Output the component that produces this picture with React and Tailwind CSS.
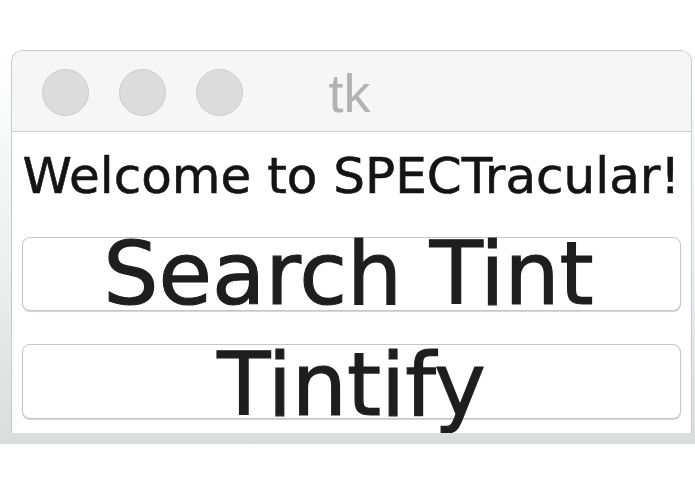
import React from "react";

// Tk window screenshot: title bar with traffic lights, label and two buttons
function TrafficLight() {
  return <span className="block w-[47px] h-[47px] rounded-full bg-[#dcdcdc] border border-[#cdcdcd]" />;
}

export default function App() {
  return (
    <div className="w-[695px] h-[494px] bg-white overflow-hidden" style={{ fontFamily: '"DejaVu Sans", "Noto Sans", sans-serif' }}>
      <div className="h-[50px]" />
      <div className="bg-gradient-to-b from-[#ffffff] via-[#eef1f1] to-[#d6dede] pl-[11px] pr-[3px] pb-[11px]">
        <div className="rounded-t-[12px] border border-b-0 border-[#c9c9c9] overflow-hidden bg-white">
          {/* Title bar */}
          <div className="h-[81px] bg-[#f6f6f6] border-b border-[#cfcfcf] grid grid-cols-[1fr_auto_1fr]">
            <div className="flex gap-[30px] pl-[30px] pt-[18px]">
              <TrafficLight />
              <TrafficLight />
              <TrafficLight />
            </div>
            <div
              className="text-[54px] leading-[60px] text-[#b3b3b3] pt-[12px] -translate-x-[2px]"
              style={{ fontFamily: '"Liberation Sans", Arial, sans-serif' }}
            >
              tk
            </div>
            <div />
          </div>

          {/* Content */}
          <div className="h-[301px] px-[10px] pt-[16px] flex flex-col">
            <p className="text-center text-[50px] leading-[56px] text-[#141414] whitespace-nowrap [-webkit-text-stroke:0.6px_#141414]">
              Welcome to SPECTracular!
            </p>
            <button className="mt-[33px] h-[74px] w-full rounded-[8px] border border-[#c6c6c6] bg-white shadow-[0_1px_1px_rgba(0,0,0,0.18)] text-[87px] leading-[72px] text-[#1e1e1e] whitespace-nowrap overflow-visible [-webkit-text-stroke:1.2px_#1e1e1e]">
              <span className="inline-block -translate-x-[3px]">Search Tint</span>
            </button>
            <button className="mt-[33px] h-[75px] w-full rounded-[8px] border border-[#c6c6c6] bg-white shadow-[0_1px_1px_rgba(0,0,0,0.18)] text-[87px] leading-[72px] pt-[4px] text-[#1e1e1e] whitespace-nowrap overflow-visible [-webkit-text-stroke:1.2px_#1e1e1e]">
              Tintify
            </button>
          </div>
        </div>
      </div>
    </div>
  );
}
